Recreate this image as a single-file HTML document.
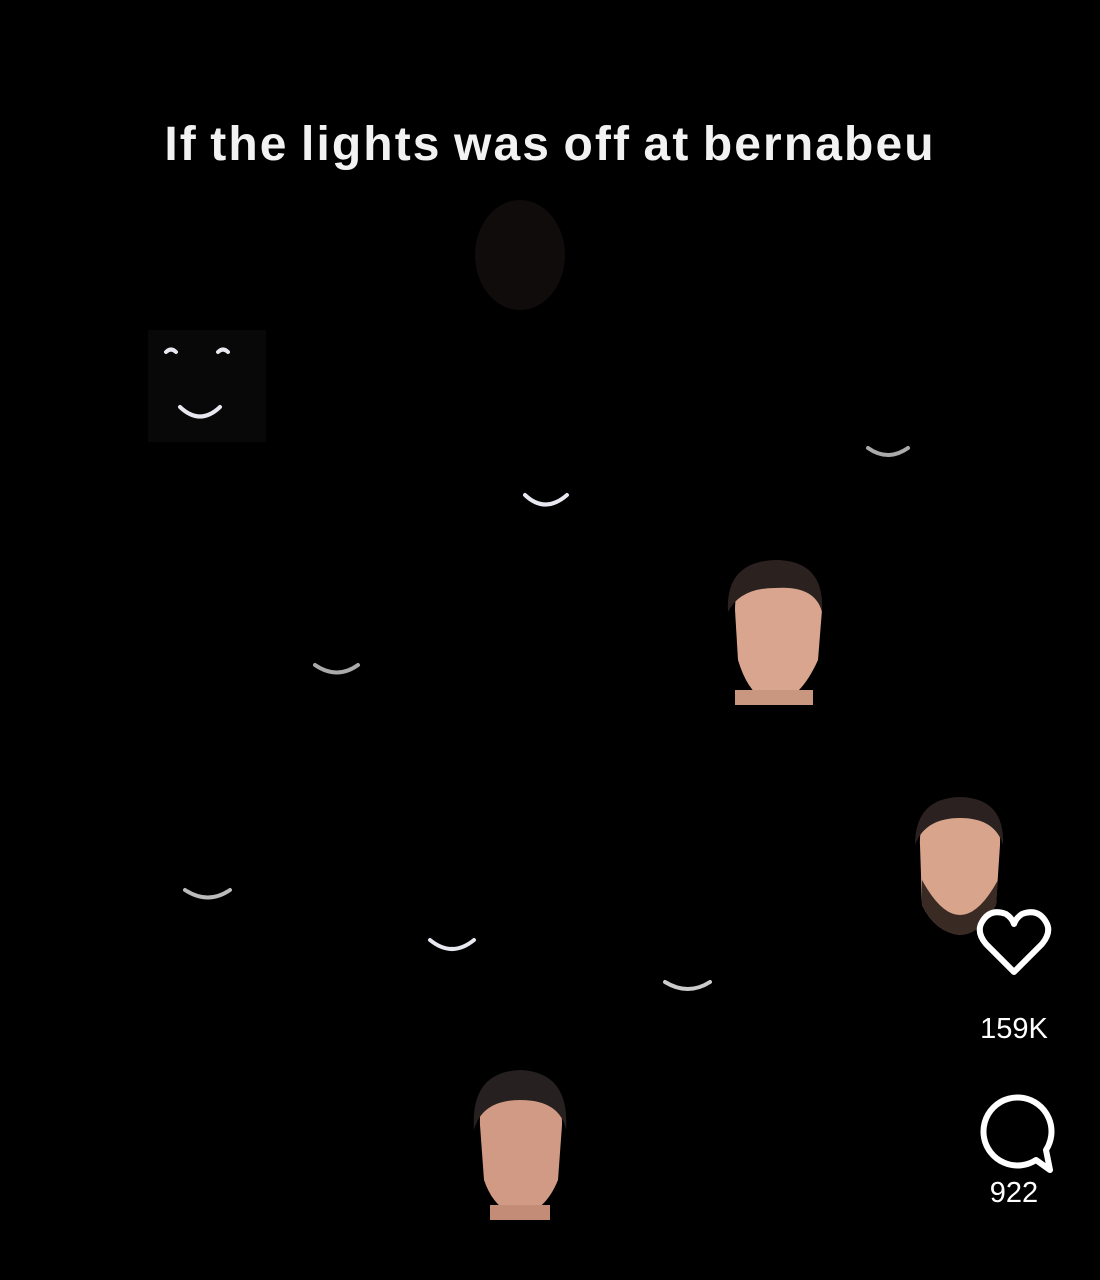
<!DOCTYPE html>
<html><head><meta charset="utf-8"><style>
html,body{margin:0;padding:0;background:#000;}
body{width:1100px;height:1280px;position:relative;overflow:hidden;font-family:"Liberation Sans",sans-serif;}
.t{position:absolute;top:117px;left:0;width:1100px;text-align:center;color:#f2f2f2;font-weight:bold;font-size:48px;letter-spacing:2.1px;word-spacing:-3px;}
.lbl{position:absolute;color:#fff;font-size:29px;width:120px;text-align:center;}
</style></head><body>
<div class="t">If the lights was off at bernabeu</div>
<svg width="1100" height="1280" style="position:absolute;left:0;top:0">
<rect x="148" y="330" width="118" height="112" fill="#080808"/>
<ellipse cx="520" cy="255" rx="45" ry="55" fill="#100c0c"/>
<g stroke="#e8e8f0" stroke-width="4" fill="none" stroke-linecap="round">
<path d="M180 407 Q200 426 220 407"/><path d="M166 352 q5-5 10 0"/><path d="M218 352 q5-5 10 0"/>
<path d="M525 495 Q545 514 567 495"/>
<path d="M868 448 Q888 462 908 448" stroke="#aaa"/>
<path d="M315 665 Q337 680 358 665" stroke="#aaa"/>
<path d="M185 890 Q208 905 230 890" stroke="#bbb"/>
<path d="M430 940 Q452 958 474 940"/>
<path d="M665 982 Q688 996 710 982" stroke="#ccc"/>
</g>
<path d="M735 610 Q735 565 775 563 Q820 565 822 610 L818 660 Q800 700 775 703 Q750 700 738 660Z" fill="#d9a58e"/>
<path d="M728 612 Q725 562 775 560 Q825 560 822 612 Q815 585 775 588 Q740 588 728 612Z" fill="#2b2220"/>
<rect x="735" y="690" width="78" height="15" fill="#c99680"/>
<path d="M920 845 Q918 805 960 803 Q1002 805 1000 845 L996 905 Q980 932 960 935 Q935 932 922 905Z" fill="#d8a58c"/>
<path d="M915 845 Q915 798 960 797 Q1005 798 1003 845 Q995 818 960 818 Q925 818 915 845Z" fill="#2a2120"/>
<path d="M922 880 Q960 950 998 880 L996 905 Q980 935 960 935 Q935 932 922 905Z" fill="#3a2a24"/>
<path d="M480 1125 Q478 1080 520 1077 Q563 1080 562 1125 L558 1180 Q545 1212 520 1215 Q495 1212 484 1180Z" fill="#d09a84"/>
<path d="M474 1130 Q470 1072 520 1070 Q570 1072 566 1130 Q560 1100 520 1100 Q482 1100 474 1130Z" fill="#262020"/>
<rect x="490" y="1205" width="60" height="15" fill="#c28c76"/>
<path d="M1014 972 L986 944 Q976 932 982 922 Q990 908 1006 914 Q1012 918 1014 924 Q1016 918 1022 914 Q1038 908 1046 922 Q1052 932 1042 944 Z" fill="none" stroke="#fff" stroke-width="6" stroke-linejoin="round"/>
<path d="M1036 1160 A34 34 0 1 1 1046 1150 L1050 1170 Z" fill="none" stroke="#fff" stroke-width="6" stroke-linejoin="round"/>
</svg>
<div class="lbl" style="left:954px;top:1013px">159K</div>
<div class="lbl" style="left:954px;top:1177px">922</div>
</body></html>
